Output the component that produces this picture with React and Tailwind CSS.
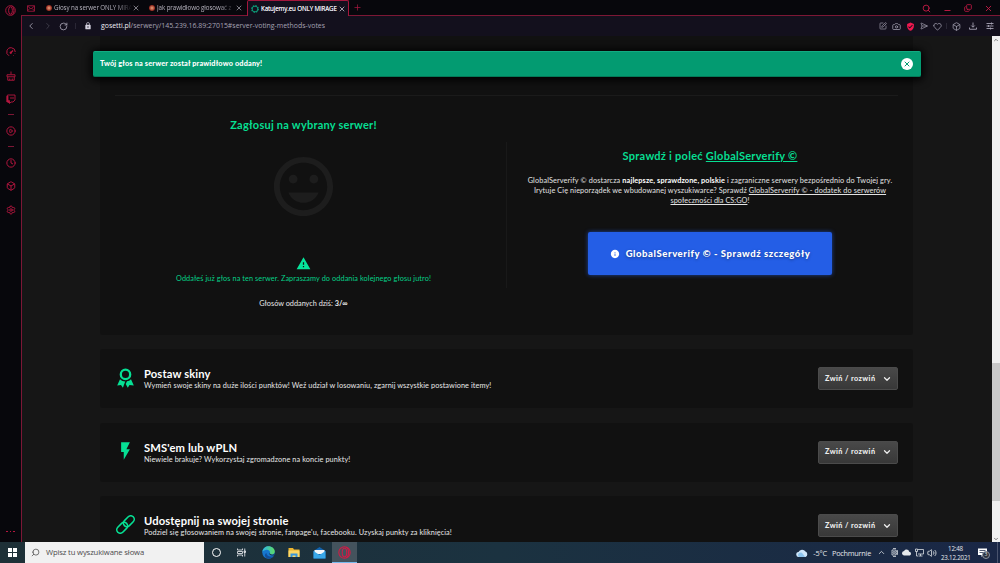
import React from "react";
import {
  X, Plus, Search, Minus, ChevronLeft, ChevronRight, ChevronUp, ChevronDown, RotateCw, SquarePen, Camera,
  Heart, Box, Clock, CirclePlay, Settings, SendHorizontal, Copy, Volume2,
} from "lucide-react";
import { MdInsertEmoticon, MdWarning, MdFlashOn, MdLock, MdVerifiedUser, MdInfo, MdCloud } from "react-icons/md";

const Opera = ({ size }) => (
  <svg width={size} height={size} viewBox="0 0 24 24" fill="none" stroke="currentColor" strokeWidth="2">
    <circle cx="12" cy="12" r="10.5" />
    <ellipse cx="12" cy="12" rx="4.2" ry="8" />
    <path d="M14.5 2.2c3 1 5 5 5 9.800s-2 8.800-5 9.800" />
  </svg>
);

const Gauge = () => (
  <svg width="10" height="10" viewBox="0 0 20 20" fill="none" stroke="currentColor" strokeWidth="2">
    <path d="M6 17.500A8.500 8.500 0 1 1 18.500 10M18 13v1M14 17.500l1-.5" />
    <path d="M9 12l5-5" strokeWidth="2.500" />
    <circle cx="9.500" cy="11.500" r="1.500" fill="currentColor" />
  </svg>
);

const Broom = () => (
  <svg width="10" height="10" viewBox="0 0 20 20" fill="none" stroke="currentColor" strokeWidth="1.800">
    <path d="M3.500 12v6.500h13V12M2 11.500V7.500h16v4zM10 1v6M7.500 18v-3M12.500 18v-3" />
  </svg>
);

const Twitch = () => (
  <svg width="10" height="10" viewBox="0 0 20 20" fill="none" stroke="currentColor" strokeWidth="1.800">
    <path d="M3 2h15v10l-4 4h-4l-3 3v-3H2V5z" />
    <path d="M3 4v10h3v4" strokeWidth="3.500" />
    <path d="M10 6v4M14 6v4" />
  </svg>
);

const MailX = () => (
  <svg width="8" height="7" viewBox="0 0 16 14" fill="none" stroke="currentColor" strokeWidth="1.700">
    <path d="M1 1.500h14v11H1zM1 2l7 6 7-6M1 12l4.500-5M15 12l-4.500-5" />
  </svg>
);

const Ribbon = () => (
  <svg width="17" height="20" viewBox="0 0 17 20">
    <circle cx="8.500" cy="6.400" r="4.700" fill="none" stroke="currentColor" strokeWidth="2.300" />
    <path d="M3 11.200a7 7 0 0 0 5.200 2.200L5.900 19.800 4 16.900.2 17.500zM14 11.200a7 7 0 0 1-4 2.100L8.700 16l2.100 3.800 1.700-2.900 4.300.6z" fill="currentColor" />
  </svg>
);

const Chain = () => (
  <svg width="19" height="19" viewBox="0 0 19 19" fill="none" stroke="currentColor" strokeWidth="1.600">
    <g transform="rotate(-45 9.500 9.500)">
      <rect x="-1.400" y="6" width="12.400" height="7" rx="3.500" />
      <rect x="8" y="6" width="12.400" height="7" rx="3.500" />
    </g>
  </svg>
);

function Tab({ icon, children, active }) {
  return (
    <div
      className={
        active
          ? "flex h-4 w-[102px] items-center rounded-t-[2px] border border-b-0 border-[#a3173d] bg-[#13101d] pl-[3px] pr-[2px] text-[#e8e6ee]"
          : "flex h-4 w-[103px] items-center pl-[5px] pr-[4px] text-[#b5b2bd]"
      }
    >
      {icon}
      <span className={active ? "ml-[2px] w-[77px] whitespace-nowrap text-[6.200px] tracking-[-0.110px] [text-shadow:0_0_0.500px_#fff]" : "ml-[2px] w-[78px] whitespace-nowrap text-[6.200px] tracking-[-0.080px] mask-r-from-80%"}>
        {children}
      </span>
      <X size={8} strokeWidth={2} className="ml-auto shrink-0" />
    </div>
  );
}

const Ember = () => <span className="h-[6px] w-[6px] shrink-0 rounded-full bg-radial from-[#e59a78] from-5% to-[#8e2019] to-70%" />;

const Ring = () => (
  <svg width="8" height="8" viewBox="0 0 16 16" fill="none" stroke="#0c9b77" className="shrink-0">
    <circle cx="8" cy="8" r="5.800" strokeWidth="2" />
    <circle cx="8" cy="8" r="6.500" strokeWidth="2.800" strokeDasharray="2.600 2.500" />
  </svg>
);

function BrowserTop() {
  return (
    <>
      <div className="flex h-4 shrink-0 items-start border-b border-[#7c1735] bg-[#07070c]">
        <div className="flex h-4 w-[19px] items-center pl-[5px] text-[#a3173d]">
          <MailX />
        </div>
        <Tab icon={<Ember />}>Głosy na serwer ONLY MIRA</Tab>
        <Tab icon={<Ember />}>Jak prawidłowo głosować z</Tab>
        <Tab active icon={<Ring />}>Katujemy.eu ONLY MIRAGE</Tab>
        <Plus size={9} className="ml-1 mt-[3px] text-[#a3173d]" />
        <div className="ml-auto flex h-4 items-center gap-[12px] pr-[7px] text-[#c81b47]">
          <Search size={9} strokeWidth={2.400} />
          <Minus size={9} strokeWidth={2.400} className="mt-[5px]" />
          <Copy size={8} strokeWidth={2.400} className="-scale-y-100" />
          <X size={9} strokeWidth={2.400} />
        </div>
      </div>
      <div className="flex h-5 shrink-0 items-center bg-[#13101d] pl-[4px] pr-[6px] text-[#a6a3b3]">
        <ChevronLeft size={10} />
        <ChevronRight size={10} className="ml-[7px] text-[#45424f]" />
        <RotateCw size={9} strokeWidth={2.200} className="ml-[6px]" />
        <span className="ml-[7px] h-[6px] w-px bg-[#2a2735]" />
        <MdLock size={8} className="ml-[8px] text-[#d5d2df]" />
        <span className="ml-[9px] whitespace-nowrap pt-px text-[6.930px]">
          <span className="text-[#f0eff5]">gosetti.pl</span>/serwery/145.239.16.89:27015#server-voting-methods-votes
        </span>
        <div className="ml-auto flex items-center">
          <SquarePen size={8} />
          <Camera size={9} className="ml-[5px]" />
          <MdVerifiedUser size={9} className="ml-[5px] text-[#f0184f]" />
          <SendHorizontal size={8} className="ml-[5px]" />
          <Heart size={9} className="ml-[5px]" />
          <span className="ml-[4px] h-[6px] w-px bg-[#2a2735]" />
          <Box size={9} className="ml-[5px]" />
          <svg className="ml-[8px]" width="8" height="8" viewBox="0 0 16 16" fill="none" stroke="currentColor" strokeWidth="1.800"><path d="M1 11v3.500h14V11M8 1v9M4.500 7L8 10.500 11.500 7" /></svg>
          <svg className="ml-[9px]" width="8" height="8" viewBox="0 0 16 16" fill="none" stroke="currentColor" strokeWidth="1.800"><path d="M1 3h14M1 8h14M1 13h14M11 1v4M5 6v4M9 11v4" /></svg>
        </div>
      </div>
    </>
  );
}

function Sidebar() {
  return (
    <aside className="flex w-[22px] shrink-0 flex-col bg-[#07070c] text-[#b5163f]">
      <div className="flex h-[15px] items-start justify-center pr-px pt-[5px]"><Opera size={11} /></div>
      <div className="flex flex-1 flex-col items-center border-r border-[#7c1735] pt-[32px]">
        <Gauge />
        <div className="mt-[14px]"><Broom /></div>
        <div className="mt-[13px]"><Twitch /></div>
        <span className="mt-[10px] h-px w-[6px] bg-[#7c1735]" />
        <CirclePlay size={10} strokeWidth={2.300} className="mt-[11px]" />
        <span className="mt-[10px] h-px w-[6px] bg-[#7c1735]" />
        <Clock size={10} strokeWidth={2.300} className="mt-[11px]" />
        <Box size={10} strokeWidth={2.300} className="mt-[13px]" />
        <Settings size={10} strokeWidth={2.300} className="mt-[14px]" />
        <span className="mb-[10px] mt-auto flex gap-[2px]">
          <i className="h-[1.500px] w-[1.500px] bg-[#b5163f]" />
          <i className="h-[1.500px] w-[1.500px] bg-[#b5163f]" />
          <i className="h-[1.500px] w-[1.500px] bg-[#b5163f]" />
        </span>
      </div>
    </aside>
  );
}

function MethodCard({ icon, title, text }) {
  return (
    <section className="flex h-[59px] shrink-0 items-center rounded-[3px] bg-[#111111] pl-[15px] pr-[15px]">
      <div className="flex w-[21px] justify-center pb-[2px] text-[#06e094]">{icon}</div>
      <div className="ml-2 whitespace-nowrap pt-px font-['Lato',sans-serif]">
        <h3 className="text-[11.200px] leading-[13px] font-bold tracking-[0.130px] text-white">{title}</h3>
        <p className="text-[7.300px] leading-[11px] tracking-[0.090px] text-[#e8e8e8]">{text}</p>
      </div>
      <button className="ml-auto flex h-[23px] w-[80px] items-center rounded-[2px] border border-[#4b4b4b] bg-linear-to-b from-[#494949] to-[#383838] pl-[6px] font-['Lato',sans-serif] text-[7.300px] font-black tracking-[0.400px] text-[#eeeeee]">
        <span className="w-[57px] whitespace-nowrap pt-px text-left">Zwiń / rozwiń</span>
        <ChevronDown size={10} strokeWidth={3} className="shrink-0" />
      </button>
    </section>
  );
}

function Page() {
  return (
    <main className="relative min-w-0 flex-1 overflow-hidden bg-[#161616] pl-[78px] pr-[79px]">
      <section className="flex h-[299px] flex-col rounded-b-[3px] bg-[#111111] px-[15px] pt-[59px] font-['Lato',sans-serif]">
        <div className="h-px bg-[#1b1b1b]" />
        <div className="flex">
          <div className="flex w-[377px] flex-col items-center whitespace-nowrap pt-[22px]">
            <h2 className="text-[11px] leading-[14px] font-bold tracking-[0.240px] text-[#06df92]">Zagłosuj na wybrany serwer!</h2>
            <MdInsertEmoticon size={71} className="mt-[19px] text-[#1d1d1d]" />
            <MdWarning size={15} className="mt-[34px] text-[#06e59b]" />
            <p className="mt-[2px] text-[7.300px] leading-[11px] tracking-[0.090px] text-[#05d088]">Oddałeś już głos na ten serwer. Zapraszamy do oddania kolejnego głosu jutro!</p>
            <p className="mt-[14px] text-[7.300px] leading-[11px] text-[#e8e8e8]">Głosów oddanych dziś: <b>3/∞</b></p>
          </div>
          <div className="ml-[14px] mt-[46px] h-[146px] w-px bg-[#191919]" />
          <div className="flex flex-1 flex-col items-center whitespace-nowrap pl-[15px] pt-[53px]">
            <h2 className="text-[11px] leading-[14px] font-bold tracking-[0.260px] text-[#06df92]">Sprawdź i poleć <u>GlobalServerify ©</u></h2>
            <div className="mt-[13px] text-center text-[7.300px] leading-[10px] tracking-[0.110px] text-[#e2e2e2]">
              <p className="tracking-[0.120px]">GlobalServerify © dostarcza <b className="text-white">najlepsze, sprawdzone, polskie</b> i zagraniczne serwery bezpośrednio do Twojej gry.</p>
              <p>Irytuje Cię nieporządek we wbudowanej wyszukiwarce? Sprawdź <u>GlobalServerify © - dodatek do serwerów</u></p>
              <p className="tracking-[0.050px]"><u>społeczności dla CS:GO</u>!</p>
            </div>
            <button className="mt-[26px] flex h-[43px] w-[244px] items-center justify-center rounded-[2px] bg-[#245ee6] pt-px text-[9.500px] font-black tracking-[0.570px] text-white shadow-[0_0_4px_#245ee6aa] [text-shadow:0_1px_3px_#0006]">
              <MdInfo size={10} className="mr-[6px]" />
              GlobalServerify © - Sprawdź szczegóły
            </button>
          </div>
        </div>
      </section>
      <div className="mt-[14px] flex flex-col gap-[14.500px]">
        <MethodCard icon={<Ribbon />} title="Postaw skiny" text="Wymień swoje skiny na duże ilości punktów! Weź udział w losowaniu, zgarnij wszystkie postawione itemy!" />
        <MethodCard icon={<MdFlashOn size={22} />} title="SMS'em lub wPLN" text="Niewiele brakuje? Wykorzystaj zgromadzone na koncie punkty!" />
        <MethodCard icon={<Chain />} title="Udostępnij na swojej stronie" text="Podziel się głosowaniem na swojej stronie, fanpage'u, facebooku. Uzyskaj punkty za kliknięcia!" />
      </div>
      <div className="absolute left-[71px] top-[15px] flex h-[26px] w-[828px] items-center justify-between rounded-[2px] border-b border-t border-b-[#047a58] border-t-[#12ab82] bg-[#039b71] pl-[7px] pr-[8px] font-['Lato',sans-serif] text-[7.300px] font-black tracking-[0.165px] text-white shadow-[0_1px_8px_2px_#000]">
        <span className="pt-px">Twój głos na serwer został prawidłowo oddany!</span>
        <span className="flex h-3 w-3 items-center justify-center rounded-full bg-white text-[#039b71]"><X size={8} strokeWidth={3} /></span>
      </div>
    </main>
  );
}

function Scrollbar() {
  return (
    <div className="flex w-2 shrink-0 flex-col items-center bg-[#f0f0f0] text-[#555]">
      <ChevronUp size={6} strokeWidth={3} className="mt-px" />
      <div className="mt-auto h-[138px] w-full bg-[#c9c9c9]" />
      <ChevronDown size={6} strokeWidth={3} className="mt-[35px]" />
    </div>
  );
}

function Taskbar() {
  return (
    <footer className="flex h-[21px] shrink-0 items-center bg-linear-to-r from-[#1e3037] via-[#1b3240] to-[#1a2746] text-[#e6e9ec]">
      <div className="flex w-[25px] justify-center">
        <div className="grid grid-cols-2 gap-[0.700px]">
          {[0, 1, 2, 3].map((n) => <i key={n} className="h-[4px] w-[4px] bg-white" />)}
        </div>
      </div>
      <div className="flex h-full w-[179px] items-center bg-[#f1f1f1] pl-[6px] text-[#4c4c4c]">
        <Search size={9} className="-scale-x-100" />
        <span className="ml-[6px] whitespace-nowrap pt-px text-[7.700px] tracking-[-0.150px]">Wpisz tu wyszukiwane słowa</span>
      </div>
      <span className="ml-[8px] h-[9px] w-[9px] rounded-full border-[1.500px] border-white" />
      <svg className="ml-[16px]" width="9" height="9" viewBox="0 0 18 18" fill="none" stroke="currentColor" strokeWidth="1.700">
        <path d="M1 1v3h10V1M1 17v-3h10v3M1 7h10v4H1zM15.500 1v16M14 6h3v3h-3z" />
      </svg>
      <svg className="ml-[16px]" width="13" height="13" viewBox="0 0 26 26">
        <defs>
          <linearGradient id="edgeTop"><stop offset="0" stopColor="#2fb5e8" /><stop offset="1" stopColor="#5fdc62" /></linearGradient>
        </defs>
        <circle cx="13" cy="13" r="12.500" fill="#1677cf" />
        <path d="M.6 12C2 4 7 .5 13 .5c7 0 12.500 5 12.500 10.500 0 4-3 6-6.500 6-3 0-4-1.500-3-3C17 10 12 6 7 8 3 9 1 11 .6 12z" fill="url(#edgeTop)" />
        <path d="M9 14c0 6 6 9 14 6-3 4-7 6-12 5-6-2-7-9-2-11z" fill="#124f9c" />
        <path d="M15 14c-1 3 1 5 5 5h4l1-3c-3 2-7 2-10-2z" fill="#1b3240" />
      </svg>
      <svg className="ml-[13px]" width="12" height="11" viewBox="0 0 24 22">
        <path d="M1 2h9l2 3h11v15H1z" fill="#eeb52f" /><path d="M1 7h22v13H1z" fill="#fbd867" /><path d="M5 20v-7h14v7h-4v-3H9v3z" fill="#3796dc" />
      </svg>
      <svg className="ml-[13px]" width="13" height="12" viewBox="0 0 26 24">
        <path d="M1 8L13 0l12 8v15H1z" fill="#1263ad" /><path d="M3 6h20v8H3z" fill="#f1f6fa" /><path d="M1 8l12 8 12-8v15H1z" fill="#38a7e8" />
      </svg>
      <div className="ml-[6px] flex h-full w-[25px] items-center justify-center border-b border-[#76b9ed] bg-[#44535d] text-[#cf1c46]"><Opera size={13} /></div>
      <div className="ml-auto flex h-full items-center text-[7.300px]">
        <svg width="12" height="10" viewBox="0 0 24 20"><path d="M6 18a5 5 0 0 1-1-10 8 8 0 0 1 14-1 6 6 0 0 1 0 11z" fill="#cfe7fb" /><path d="M6 18a5 5 0 0 1 3-9c4 0 5 3 9 9z" fill="#8ec5ee" /></svg>
        <span className="ml-[5px] pt-px tracking-[-0.150px]">-5°C</span>
        <span className="ml-[5px] w-[39px] whitespace-nowrap pt-px tracking-[-0.230px]">Pochmurnie</span>
        <ChevronUp size={9} className="ml-[6px]" />
        <svg className="ml-[5px]" width="7" height="9" viewBox="0 0 14 18" fill="none" stroke="currentColor" strokeWidth="1.500"><path d="M4 1h6M4 17h6M2 4h8v10H2zM10 7l3-2v8l-3-2" /><circle cx="6" cy="9" r="2" /></svg>
        <MdCloud size={9} className="ml-[4px]" />
        <svg className="ml-[4px]" width="9" height="9" viewBox="0 0 18 18" fill="none" stroke="currentColor" strokeWidth="1.500"><path d="M6 3h11v9H6M11 12v4M7 16h8M1 2h4v5H1zM3 7v9h3" /></svg>
        <Volume2 size={10} className="ml-[3px]" />
        <div className="ml-[4px] w-[29px] whitespace-nowrap text-center text-[6.200px] leading-[9px] tracking-[-0.200px]"><div>12:48</div><div>23.12.2021</div></div>
        <div className="relative ml-[8px] w-[19px]">
          <svg width="9" height="9" viewBox="0 0 18 18"><path d="M0 1h18v13h-7l-4 4v-4H0z" fill="#fff" /><path d="M3 5h12M3 9h12" stroke="#1a2746" strokeWidth="1.500" /></svg>
          <span className="absolute left-[4px] top-[3px] flex h-[8px] w-[8px] items-center justify-center rounded-full border border-[#8b929f] bg-[#2a303c] text-[5px]">3</span>
        </div>
        <span className="h-full w-px bg-[#49536d]" />
        <span className="w-[2px]" />
      </div>
    </footer>
  );
}

export default function App() {
  return (
    <div className="flex h-[563px] w-[1000px] flex-col overflow-hidden bg-[#161616] font-['Open_Sans','Noto_Sans',sans-serif]">
      <div className="flex min-h-0 flex-1">
        <Sidebar />
        <div className="flex min-w-0 flex-1 flex-col">
          <BrowserTop />
          <div className="flex min-h-0 flex-1">
            <Page />
            <Scrollbar />
          </div>
        </div>
      </div>
      <Taskbar />
    </div>
  );
}
